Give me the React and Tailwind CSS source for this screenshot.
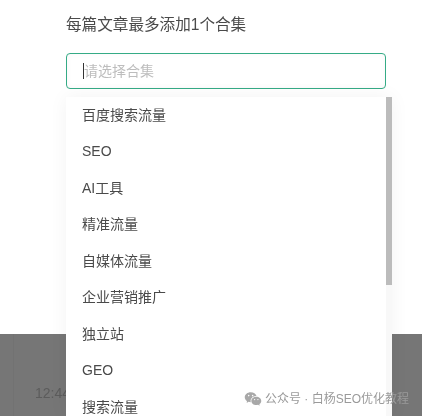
import { RiWechatFill } from "react-icons/ri";

const options = [
  "百度搜索流量",
  "SEO",
  "AI工具",
  "精准流量",
  "自媒体流量",
  "企业营销推广",
  "独立站",
  "GEO",
  "搜索流量",
];

export default function App() {
  return (
    <div className="relative flex h-[416px] w-[422px] flex-col overflow-hidden bg-white font-['Liberation_Sans','Noto_Sans_CJK_SC',sans-serif] blur-[0.35px]">
      {/* modal body */}
      <div className="h-[334px] shrink-0 bg-white px-[66px] pt-[13px]">
        <h2 className="text-[15.6px] leading-[24px] font-normal text-[#4a4a4a]">
          每篇文章最多添加1个合集
        </h2>
        <div className="mt-[16px] flex h-[36px] w-[320px] items-center rounded-[4px] border border-[#35ab86] bg-white pl-[16px] shadow-[0_0_6px_rgba(0,0,0,0.03)_inset]">
          <span className="h-[16px] w-px bg-[#333]" />
          <span className="text-[14px] text-[#bdbdbd]">请选择合集</span>
        </div>
      </div>

      {/* page behind the modal */}
      <div className="flex flex-1 items-end bg-[#767676] pb-[14px] pl-[13px]">
        <span className="mr-[21px] mb-[-14px] h-[82px] w-px self-end bg-[#727272]" />
        <span className="text-[14px] leading-[18px] text-[#5c5c5c]">12:44</span>
      </div>

      {/* dropdown */}
      <div className="absolute top-[97px] left-[66px] h-[319px] w-[326px] bg-[#f8f8f8] shadow-[0_0_18px_rgba(0,0,0,0.05)]">
        <div className="h-full w-[320px] bg-white pl-[16px]">
          {options.map((o) => (
            <div
              key={o}
              className="flex h-[36.5px] items-center text-[14px] text-[#4a4a4a]"
            >
              {o}
            </div>
          ))}
        </div>
        <div className="absolute top-0 right-0 h-[188px] w-[6px] bg-[#bcbcbc]" />
      </div>

      {/* watermark */}
      <div className="absolute top-[389px] right-[13px] flex items-center gap-[3px] text-[12px] leading-[20px] text-[#9a9a9a]">
        <RiWechatFill className="size-[18px] text-[#a8a8a8]" />
        <span>公众号 · 白杨SEO优化教程</span>
      </div>
    </div>
  );
}
